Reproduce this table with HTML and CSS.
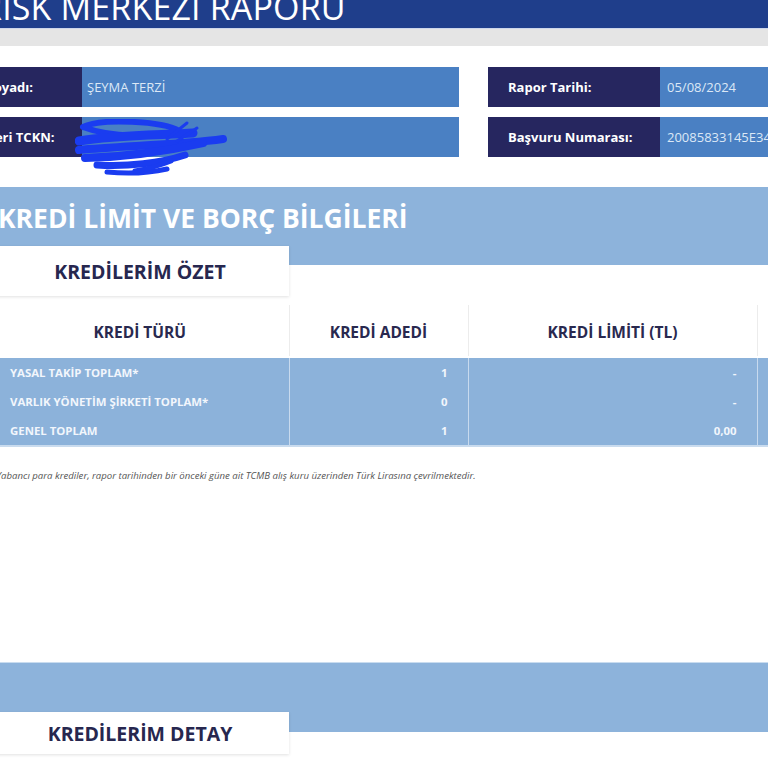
FILE: index.html
```html
<!DOCTYPE html>
<html lang="tr">
<head>
<meta charset="utf-8">
<title>Risk Merkezi Raporu</title>
<link rel="stylesheet" href="styles.css">
</head>
<body>
<div class="page">
  <header class="topbar"><h1>RİSK MERKEZİ RAPORU</h1></header>
  <div class="strip"></div>

  <section class="info">
    <div class="info-col">
      <div class="info-row"><div class="lbl">Adı Soyadı:</div><div class="val">ŞEYMA TERZİ</div></div>
      <div class="info-row"><div class="lbl">Müşteri TCKN:</div>
        <div class="val redacted">
          <svg class="scribble" width="170" height="60" viewBox="0 0 170 60">
            <g fill="none" stroke="#1a3cf0" stroke-linecap="round" stroke-linejoin="round">
              <path d="M8 8 C26 -1 88 2 104 12 C84 20 34 18 8 8" stroke-width="6"/>
              <path d="M4 22 C40 16 92 16 118 14" stroke-width="9"/>
              <path d="M4 31 C44 27 104 26 148 20" stroke-width="8"/>
              <path d="M10 39 C50 38 92 32 128 24" stroke-width="8"/>
              <path d="M22 46 C52 48 86 44 110 36" stroke-width="7"/>
              <path d="M32 53 C52 55 74 54 92 50" stroke-width="5"/>
              <path d="M92 20 L112 4" stroke-width="3"/>
              <path d="M102 22 L122 9" stroke-width="3"/>
              <path d="M60 52 C72 50 86 46 96 42" stroke-width="5"/>
            </g>
          </svg>
        </div>
      </div>
    </div>
    <div class="info-col right">
      <div class="info-row"><div class="lbl">Rapor Tarihi:</div><div class="val">05/08/2024</div></div>
      <div class="info-row"><div class="lbl">Başvuru Numarası:</div><div class="val">20085833145E34</div></div>
    </div>
  </section>

  <section class="band"><h2>KREDİ LİMİT VE BORÇ BİLGİLERİ</h2></section>
  <div class="tab">KREDİLERİM ÖZET</div>

  <table class="summary">
    <colgroup>
      <col class="c1"><col class="c2"><col class="c3"><col class="c4">
    </colgroup>
    <thead>
      <tr><th>KREDİ TÜRÜ</th><th>KREDİ ADEDİ</th><th>KREDİ LİMİTİ (TL)</th><th></th></tr>
    </thead>
    <tbody>
      <tr><td class="name">YASAL TAKİP TOPLAM*</td><td class="num">1</td><td class="num">-</td><td></td></tr>
      <tr><td class="name">VARLIK YÖNETİM ŞİRKETİ TOPLAM*</td><td class="num">0</td><td class="num">-</td><td></td></tr>
      <tr><td class="name">GENEL TOPLAM</td><td class="num">1</td><td class="num">0,00</td><td></td></tr>
    </tbody>
  </table>

  <p class="note">*Yabancı para krediler, rapor tarihinden bir önceki güne ait TCMB alış kuru üzerinden Türk Lirasına çevrilmektedir.</p>

  <section class="band band2"></section>
  <div class="tab tab2">KREDİLERİM DETAY</div>
</div>
</body>
</html>
```

FILE: styles.css
```css
html, body {
  margin: 0;
  padding: 0;
  background: #ffffff;
  overflow: hidden;
}

body {
  font-family: "Open Sans", "Liberation Sans", sans-serif;
  width: 768px;
  height: 768px;
}

.page {
  width: 840px;
  margin-left: -60px;
}

.topbar {
  height: 28px;
  background: #1f3e8b;
  overflow: hidden;
}

.topbar h1 {
  margin: -10px 0 0 41px;
  font-size: 34px;
  line-height: 34px;
  font-weight: 400;
  color: #ffffff;
  letter-spacing: 0.15px;
}

.strip {
  height: 17px;
  background: #e5e5e5;
  border-top: 1px solid #cdd6ea;
}

.info {
  display: grid;
  grid-template-columns: 519px 1fr;
  column-gap: 29px;
  margin-top: 21px;
}

.info-col {
  display: flex;
  flex-direction: column;
  gap: 10px;
}

.info-row {
  display: flex;
  height: 40px;
}

.lbl {
  width: 142px;
  flex: none;
  box-sizing: border-box;
  padding-left: 22px;
  background: #26265f;
  color: #ffffff;
  font-size: 13px;
  font-weight: 700;
  display: flex;
  align-items: center;
}

.right .lbl {
  width: 172px;
  padding-left: 20px;
}

.val {
  flex: 1;
  background: #4a80c3;
  color: #dce8f6;
  font-size: 13px;
  display: flex;
  align-items: center;
  padding-left: 5px;
  white-space: nowrap;
  overflow: visible;
}

.right .val {
  padding-left: 7px;
  overflow: hidden;
}

.redacted {
  position: relative;
}

.scribble {
  position: absolute;
  left: -7px;
  top: 2px;
}

.band {
  margin-top: 30px;
  height: 78px;
  background: #8db3db;
  box-sizing: border-box;
  padding: 13px 0 0 58px;
}

.band h2 {
  margin: 0;
  font-size: 26.5px;
  font-weight: 700;
  color: #ffffff;
  line-height: 36px;
  letter-spacing: 0;
}

.tab {
  position: relative;
  width: 298px;
  height: 50px;
  margin: -19px 0 0 51px;
  background: #ffffff;
  box-shadow: 0 1px 3px rgba(0, 0, 0, 0.12);
  display: flex;
  align-items: center;
  justify-content: center;
  font-size: 19.5px;
  font-weight: 700;
  color: #27274f;
}

.summary {
  margin: 9px 0 0 51px;
  border-collapse: collapse;
  table-layout: fixed;
  width: 789px;
}

.summary .c1 { width: 298px; }
.summary .c2 { width: 179px; }
.summary .c3 { width: 289px; }
.summary .c4 { width: 23px; }

.summary th {
  height: 52px;
  padding: 3px 0 0;
  box-sizing: border-box;
  font-size: 15.5px;
  font-weight: 700;
  color: #29294f;
  text-align: center;
  border-right: 1px solid #ececec;
  border-bottom: 2px solid #ffffff;
}

.summary td {
  height: 29px;
  padding: 0 20px 0 19px;
  background: #8cb2da;
  color: #f2f6fc;
  font-size: 11.4px;
  font-weight: 700;
  border-right: 1px solid #c8daee;
  white-space: nowrap;
}

.summary tbody tr:last-child td {
  border-bottom: 2px solid #c9dbee;
}

.summary td.num {
  text-align: right;
}

.note {
  margin: 23px 0 0 51px;
  font-size: 9.6px;
  font-style: italic;
  color: #555555;
  line-height: 12px;
}

.band2 {
  margin-top: 180px;
  height: 70px;
  padding: 0;
  border-top: 1px solid #c9dcef;
}

.tab2 {
  height: 42px;
  margin-top: -20px;
}
```
